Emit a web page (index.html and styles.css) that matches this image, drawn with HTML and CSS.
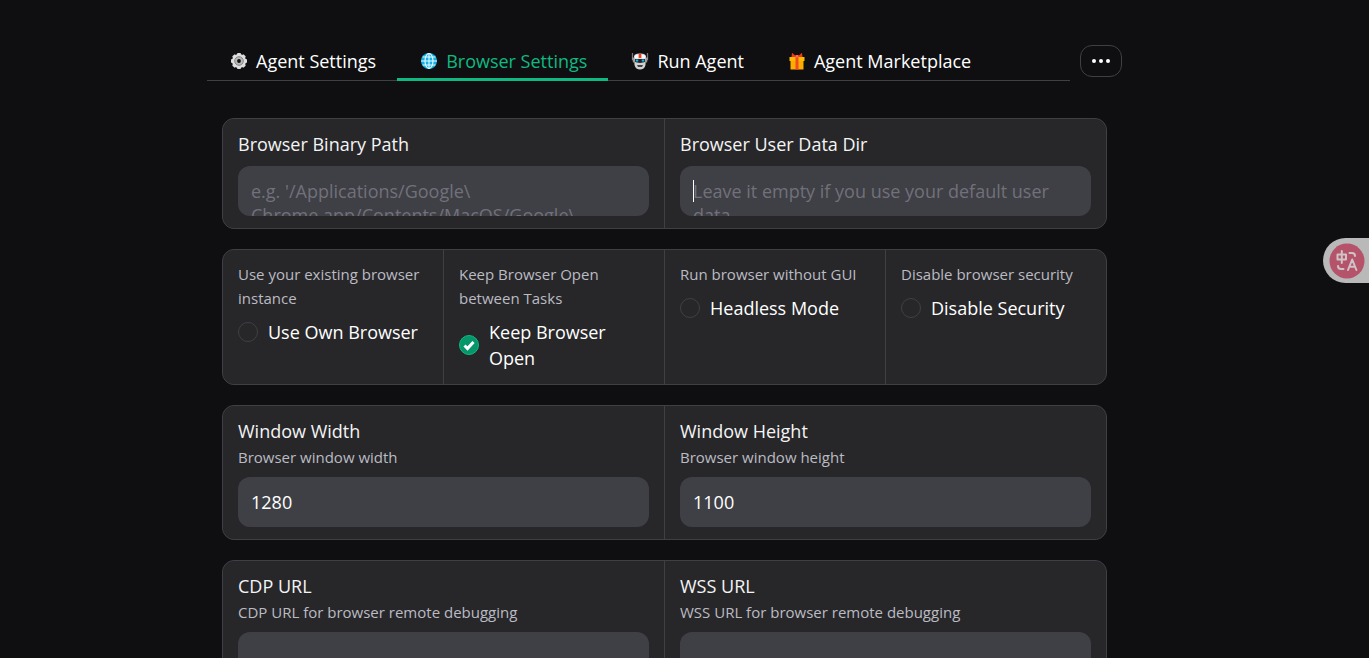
FILE: index.html
```html
<!DOCTYPE html>
<html lang="en">
<head>
<meta charset="utf-8">
<title>Browser Settings</title>
<link rel="stylesheet" href="styles.css">
</head>
<body>
<main class="app">
  <header class="topbar">
    <nav class="tabs" role="tablist">
      <button class="tab" role="tab" type="button">
        <svg class="icon" viewBox="0 0 18 18" aria-hidden="true">
          <g fill="#dedede"><circle cx="9" cy="9" r="7"/>
          <g><rect x="7" y="1" width="4" height="16" rx="1"/><rect x="1" y="7" width="16" height="4" rx="1"/></g>
          <g transform="rotate(45 9 9)"><rect x="7" y="1" width="4" height="16" rx="1"/><rect x="1" y="7" width="16" height="4" rx="1"/></g></g>
          <circle cx="9" cy="9" r="4.3" fill="#b9b9b9" stroke="#868686"/>
          <circle cx="9" cy="9" r="1.9" fill="#111"/>
        </svg>
        Agent Settings
      </button>
      <button class="tab tab-active" role="tab" type="button" aria-selected="true">
        <svg class="icon" viewBox="0 0 18 18" aria-hidden="true">
          <circle cx="9" cy="9" r="8" fill="#16b0e6"/>
          <g fill="none" stroke="#e8fbff" stroke-width="1.1"><ellipse cx="9" cy="9" rx="4" ry="7.5"/><path d="M9 1v16M1 9h16M2.5 5h13M2.5 13h13"/></g>
        </svg>
        Browser Settings
      </button>
      <button class="tab" role="tab" type="button">
        <svg class="icon" viewBox="0 0 18 18" aria-hidden="true">
          <path d="M1.500 1v7M16.500 1v7" stroke="#777" stroke-width="1.300"/>
          <path d="M1 5.500h2v5H2zM15 5.500h2l-1 5h-1z" fill="#999"/>
          <path d="M3 5c0-3 3-3.500 6-3.500s6 .5 6 3.500l-.5 8c-.5 3-3 4.500-5.500 4.500s-5-1.500-5.500-4.500z" fill="#d0d0d0"/>
          <path d="M3.500 4C5 1.500 13 1.500 14.500 4L14 6.500H4z" fill="#fafafa"/>
          <path d="M7.600 2h2.800v4H7.600z" fill="#ef4123"/>
          <path d="M4 7h10v2.800c-2 1.500-8 1.500-10 0z" fill="#20242a"/>
          <path d="M4.800 7.500h2.400v2H4.800zM10.800 7.500h2.400v2h-2.400z" fill="#16b9e8"/>
          <path d="M6 13h6l-1 2H7z" fill="#444"/>
        </svg>
        Run Agent
      </button>
      <button class="tab" role="tab" type="button">
        <svg class="icon" viewBox="0 0 18 18" aria-hidden="true">
          <path d="M1.500 5h15v4h-15z" fill="#ffb900"/><path d="M2.500 9h13v8.500h-13z" fill="#ffab00"/>
          <path d="M7.500 5h3v12.500h-3z" fill="#ef4a24"/>
          <path d="M9 5L4 .8 3.500 5zM9 5l5-4.200.5 4.200z" fill="#e83a1e"/>
          <path d="M7.500 3h3v2.500h-3z" fill="#ff6840"/>
        </svg>
        Agent Marketplace
      </button>
    </nav>
    <button class="more" type="button" aria-label="More tabs">
      <svg class="dots" viewBox="0 0 18 6" aria-hidden="true"><circle cx="2" cy="3" r="2"/><circle cx="9" cy="3" r="2"/><circle cx="16" cy="3" r="2"/></svg>
    </button>
  </header>

  <form class="panel">
    <section class="card halves">
      <div class="cell">
        <label class="label" for="binary">Browser Binary Path</label>
        <textarea class="field" id="binary" rows="1" placeholder="e.g. '/Applications/Google\ Chrome.app/Contents/MacOS/Google\ Chrome'"></textarea>
      </div>
      <div class="cell">
        <label class="label" for="datadir">Browser User Data Dir</label>
        <div class="field-wrap">
          <textarea class="field" id="datadir" rows="1" placeholder="Leave it empty if you use your default user data"></textarea>
          <span class="caret"></span>
        </div>
      </div>
    </section>

    <section class="card quarters">
      <div class="cell">
        <p class="info" id="own-info">Use your existing browser instance</p>
        <label class="check"><input class="box" type="checkbox" aria-describedby="own-info"><span>Use Own Browser</span></label>
      </div>
      <div class="cell">
        <p class="info" id="keep-info">Keep Browser Open between Tasks</p>
        <label class="check"><span class="box-wrap"><input class="box" type="checkbox" checked aria-describedby="keep-info"><svg class="tick" viewBox="0 0 20 20" aria-hidden="true"><path d="M5.500 10.500l3 3 6-6.500"/></svg></span><span>Keep Browser Open</span></label>
      </div>
      <div class="cell">
        <p class="info" id="gui-info">Run browser without GUI</p>
        <label class="check"><input class="box" type="checkbox" aria-describedby="gui-info"><span>Headless Mode</span></label>
      </div>
      <div class="cell">
        <p class="info" id="sec-info">Disable browser security</p>
        <label class="check"><input class="box" type="checkbox" aria-describedby="sec-info"><span>Disable Security</span></label>
      </div>
    </section>

    <section class="card halves">
      <div class="cell">
        <label class="label" for="width">Window Width</label>
        <p class="info">Browser window width</p>
        <input class="field" id="width" type="number" value="1280">
      </div>
      <div class="cell">
        <label class="label" for="height">Window Height</label>
        <p class="info">Browser window height</p>
        <input class="field" id="height" type="number" value="1100">
      </div>
    </section>

    <section class="card halves">
      <div class="cell">
        <label class="label" for="cdp">CDP URL</label>
        <p class="info">CDP URL for browser remote debugging</p>
        <input class="field" id="cdp" type="text">
      </div>
      <div class="cell">
        <label class="label" for="wss">WSS URL</label>
        <p class="info">WSS URL for browser remote debugging</p>
        <input class="field" id="wss" type="text">
      </div>
    </section>
  </form>
</main>

<button class="translate" type="button" aria-label="Translate page">
  <svg class="translate-icon" viewBox="0 0 36 36" aria-hidden="true">
    <circle cx="18" cy="18" r="17.500" fill="#b5536b"/>
    <g fill="none" stroke="#cfc3c6" stroke-width="2" stroke-linecap="round" stroke-linejoin="round">
      <path d="M8.500 11.500h8.500v5H8.500zM12.800 8v12"/>
      <path d="M20.500 10h2.500q3 0 3 3"/>
      <path d="M9 23q0 3 3 3h2.500"/>
      <path d="M19 27l4.200-10.500L27.400 27M20.500 23.800h5.400"/>
    </g>
  </svg>
</button>
</body>
</html>
```

FILE: styles.css
```css
* {
  box-sizing: border-box;
}

html {
  background: #0f0f11;
}

body {
  margin: 0;
  padding: 45px 40px 0 0;
  height: 100vh;
  overflow: hidden;
  color: #fff;
  font: 18px/26px "Open Sans", "Noto Sans", sans-serif;
}

button,
input,
textarea {
  font: inherit;
  color: inherit;
}

.app {
  max-width: 915px;
  margin: 0 auto;
}

.topbar {
  display: flex;
  align-items: flex-start;
  gap: 10px;
}

.tabs {
  flex: 1;
  display: flex;
  height: 36px;
  border-bottom: 1px solid #3f3f46;
}

.tab {
  display: flex;
  align-items: center;
  gap: 8px;
  height: 36px;
  padding: 0 21px 4px 23px;
  border: 0;
  background: none;
  white-space: nowrap;
}

.tab-active {
  padding-bottom: 1px;
  border-bottom: 3px solid #10b981;
  color: #10b981;
}

.icon {
  width: 18px;
  height: 18px;
}

.more {
  display: flex;
  align-items: center;
  justify-content: center;
  width: 42px;
  height: 32px;
  padding: 0;
  border: 1px solid #3f3f46;
  border-radius: 12px;
  background: none;
}

.dots {
  width: 18px;
  height: 6px;
  fill: #fff;
}

.panel {
  display: flex;
  flex-direction: column;
  gap: 20px;
  padding: 37px 15px 0;
}

.card {
  display: grid;
  gap: 1px;
  border: 1px solid #3f3f46;
  border-radius: 12px;
  background: #3f3f46;
  overflow: hidden;
}

.halves {
  grid-template-columns: repeat(2, 1fr);
}

.quarters {
  grid-template-columns: repeat(4, 1fr);
}

.cell {
  padding: 12px 15px;
  background: #27272a;
}

.quarters .cell {
  padding-bottom: 13px;
}

.label {
  display: block;
  color: #f4f4f5;
}

.info {
  margin: 0;
  color: #bbbbc2;
  font-size: 15px;
  line-height: 24px;
}

.label + .info {
  margin-top: 1px;
}

.field {
  display: block;
  width: 100%;
  height: 50px;
  margin: 9px 0 0;
  padding: 13px;
  border: 0;
  border-radius: 12px;
  outline: 0;
  background: #3f3f46;
  line-height: 24px;
  resize: none;
  overflow: hidden;
  appearance: textfield;
}

.info + .field {
  margin-top: 8px;
}

.field::placeholder {
  color: #71717a;
  opacity: 1;
}

.field-wrap {
  position: relative;
}

.caret {
  position: absolute;
  top: 14px;
  left: 13px;
  width: 1px;
  height: 22px;
  background: #fff;
}

.check {
  display: flex;
  align-items: center;
  gap: 10px;
  margin-top: 9px;
}

.box {
  appearance: none;
  display: block;
  flex: none;
  width: 20px;
  height: 20px;
  margin: 0;
  border: 1px solid #3f3f46;
  border-radius: 50%;
}

.box:checked {
  border-color: #10b981;
  background: #059669;
}

.box-wrap {
  position: relative;
  flex: none;
}

.tick {
  position: absolute;
  inset: 0;
  fill: none;
  stroke: #fff;
  stroke-width: 3;
  pointer-events: none;
}

.translate {
  position: fixed;
  top: 238px;
  right: 0;
  display: flex;
  align-items: center;
  width: 46px;
  height: 45px;
  padding: 0 0 0 6px;
  border: 0;
  border-radius: 23px 0 0 23px;
  background: #b9b9b9;
}

.translate-icon {
  width: 36px;
  height: 36px;
}
```
